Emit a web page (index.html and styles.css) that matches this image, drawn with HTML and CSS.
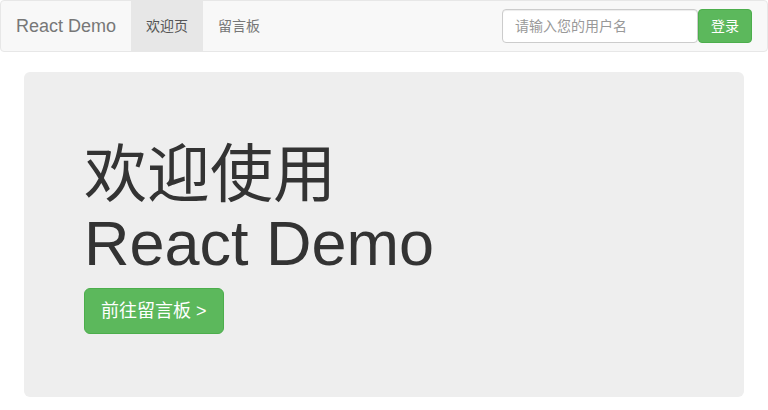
FILE: index.html
```html
<!DOCTYPE html>
<html lang="zh-CN">
<head>
<meta charset="utf-8">
<title>React Demo</title>
<link rel="stylesheet" href="styles.css">
</head>
<body>
<nav class="navbar">
  <div class="navbar-left">
    <a class="brand" href="#">React Demo</a>
    <ul class="nav">
      <li><a class="nav-link active" href="#">欢迎页</a></li>
      <li><a class="nav-link" href="#">留言板</a></li>
    </ul>
  </div>
  <form class="navbar-form">
    <input class="form-control" type="text" placeholder="请输入您的用户名">
    <button class="btn btn-success" type="button">登录</button>
  </form>
</nav>
<main class="container">
  <section class="jumbotron">
    <h1 class="title">欢迎使用<br>React Demo</h1>
    <div class="actions">
      <a class="btn btn-success btn-lg" href="#">前往留言板 &gt;</a>
    </div>
  </section>
</main>
</body>
</html>
```
FILE: styles.css
```css
* { box-sizing: border-box; }
html, body { margin: 0; padding: 0; }
body {
  font-family: "Liberation Sans", Arial, "Noto Sans CJK SC", sans-serif;
  font-size: 14px;
  line-height: 1.42857;
  color: #333;
  background: #fff;
}
.navbar {
  display: flex;
  justify-content: space-between;
  align-items: flex-start;
  min-height: 52px;
  background: #f8f8f8;
  border: 1px solid #e7e7e7;
  border-radius: 4px;
  margin-bottom: 20px;
  padding: 0 15px 0 0;
}
.navbar-left { display: flex; }
.brand {
  display: block;
  height: 50px;
  padding: 15px;
  font-size: 18px;
  line-height: 20px;
  color: #777;
  text-decoration: none;
}
.nav { display: flex; list-style: none; margin: 0; padding: 0; }
.nav-link {
  display: block;
  padding: 15px;
  line-height: 20px;
  color: #777;
  text-decoration: none;
}
.nav-link.active { background: #e7e7e7; color: #555; }
.navbar-form {
  display: flex;
  align-items: center;
  gap: 0;
  margin: 8px 0 0 0;
}
.form-control {
  width: 196px;
  height: 34px;
  padding: 6px 12px;
  font: inherit;
  font-size: 14px;
  color: #555;
  background: #fff;
  border: 1px solid #ccc;
  border-radius: 4px;
  box-shadow: inset 0 1px 1px rgba(0,0,0,.075);
}
.form-control::placeholder { color: #999; }
.btn {
  display: inline-block;
  padding: 6px 12px;
  font: inherit;
  font-size: 14px;
  line-height: 20px;
  text-align: center;
  text-decoration: none;
  border: 1px solid transparent;
  border-radius: 4px;
  cursor: pointer;
}
.btn-success { color: #fff; background: #5cb85c; border-color: #4cae4c; }
.btn-lg {
  padding: 10px 16px;
  font-size: 18px;
  line-height: 24px;
  border-radius: 6px;
}
.container { padding: 0 24px; }
.jumbotron {
  background: #eee;
  border-radius: 6px;
  padding: 48px 60px;
  height: 325px;
}
.title {
  margin: 20px 0 9px;
  font-size: 63px;
  font-weight: 400;
  line-height: 1.1;
  color: #333;
}
.actions { display: flex; }
```
